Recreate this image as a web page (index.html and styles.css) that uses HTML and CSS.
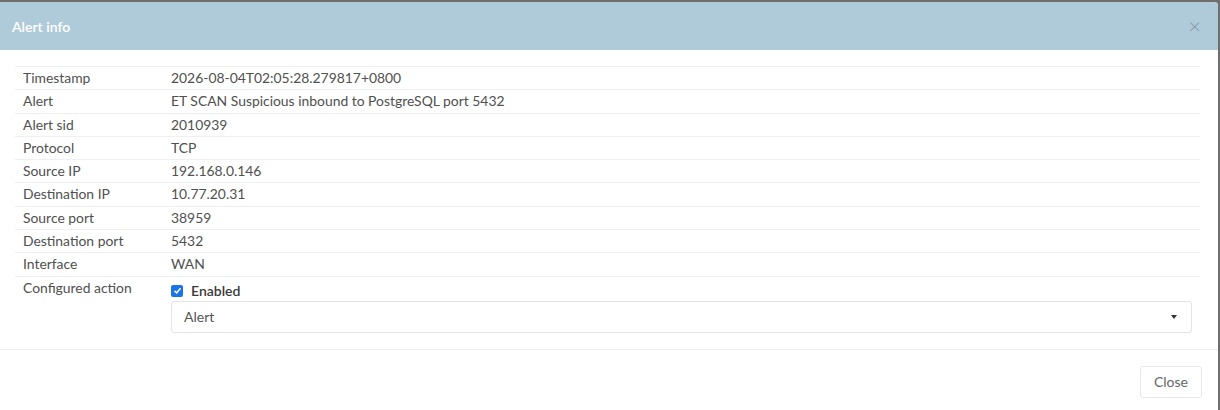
FILE: index.html
```html
<!DOCTYPE html>
<html lang="en">
<head>
    <meta charset="UTF-8">
    <title>Alert info</title>
    <link rel="stylesheet" href="styles.css">
</head>
<body>
    <div class="modal">
        <div class="modal-header">
            <h4>Alert info</h4>
            <span class="close-x">&times;</span>
        </div>
        <div class="modal-body">
            <table class="info">
                <tr><td class="label">Timestamp</td><td>2026-08-04T02:05:28.279817+0800</td></tr>
                <tr><td class="label">Alert</td><td>ET SCAN Suspicious inbound to PostgreSQL port 5432</td></tr>
                <tr><td class="label">Alert sid</td><td>2010939</td></tr>
                <tr><td class="label">Protocol</td><td>TCP</td></tr>
                <tr><td class="label">Source IP</td><td>192.168.0.146</td></tr>
                <tr><td class="label">Destination IP</td><td>10.77.20.31</td></tr>
                <tr><td class="label">Source port</td><td>38959</td></tr>
                <tr><td class="label">Destination port</td><td>5432</td></tr>
                <tr><td class="label">Interface</td><td>WAN</td></tr>
                <tr class="last">
                    <td class="label">Configured action</td>
                    <td>
                        <label class="check"><span class="box">
                            <svg viewBox="0 0 12 12" width="9" height="9"><path d="M2 6.5 L4.8 9.2 L10 3" fill="none" stroke="#fff" stroke-width="2"/></svg>
                        </span>Enabled</label>
                        <div class="select">
                            <span>Alert</span>
                            <span class="caret"></span>
                        </div>
                    </td>
                </tr>
            </table>
        </div>
        <div class="modal-footer">
            <button class="btn">Close</button>
        </div>
    </div>
</body>
</html>
```

FILE: styles.css
```css
body {
    margin: 0;
    padding: 0;
    background-color: #6e6e6e;
    font-family: Lato, 'Open Sans', sans-serif;
    font-size: 13.9px;
    color: #505050;
    height: 410px;
    overflow: hidden;
}
.modal {
    margin-top: 2px;
    width: 1218px;
    height: 408px;
    background-color: #fff;
    border-top-right-radius: 4px;
    overflow: hidden;
}
.modal-header {
    height: 48px;
    background-color: #afcbd9;
    display: flex;
    align-items: center;
    justify-content: space-between;
    padding: 0 17px 0 12px;
}
.modal-header h4 {
    margin: 0;
    color: #fff;
    font-size: 14px;
    font-weight: 600;
}
.close-x {
    color: #7f919c;
    font-size: 22px;
    line-height: 1;
    font-weight: 300;
}
.modal-body {
    padding: 16px 18px 12px 15px;
    border-bottom: 1px solid #eee;
}
.info {
    width: 100%;
    border-collapse: collapse;
}
.info td {
    border-top: 1px solid #eef0f2;
    padding: 1px 8px;
    line-height: 20.3px;
    vertical-align: top;
}
.info td.label {
    width: 132px;
}
.info tr.last td {
    padding-bottom: 4px;
}
.check {
    display: flex;
    align-items: center;
    gap: 8px;
    margin-top: 3px;
    font-weight: 600;
    color: #3a3a3a;
    font-size: 14px;
}
.box {
    width: 12px;
    height: 12px;
    border-radius: 2px;
    background-color: #1a73e8;
    display: flex;
    align-items: center;
    justify-content: center;
}
.select {
    margin-top: 0;
    height: 30px;
    border: 1px solid #e4e4e4;
    border-radius: 3px;
    display: flex;
    align-items: center;
    justify-content: space-between;
    padding: 0 14px 0 12px;
    color: #555;
    font-size: 14px;
}
.caret {
    width: 0;
    height: 0;
    border-left: 3.5px solid transparent;
    border-right: 3.5px solid transparent;
    border-top: 4px solid #333;
}
.modal-footer {
    display: flex;
    justify-content: flex-end;
    padding: 16px 16px 0 0;
}
.btn {
    font-family: Lato, 'Open Sans', sans-serif;
    font-size: 14px;
    color: #666;
    background-color: #fff;
    border: 1px solid #e8e8e8;
    border-radius: 3px;
    width: 62px;
    height: 32px;
}
```
